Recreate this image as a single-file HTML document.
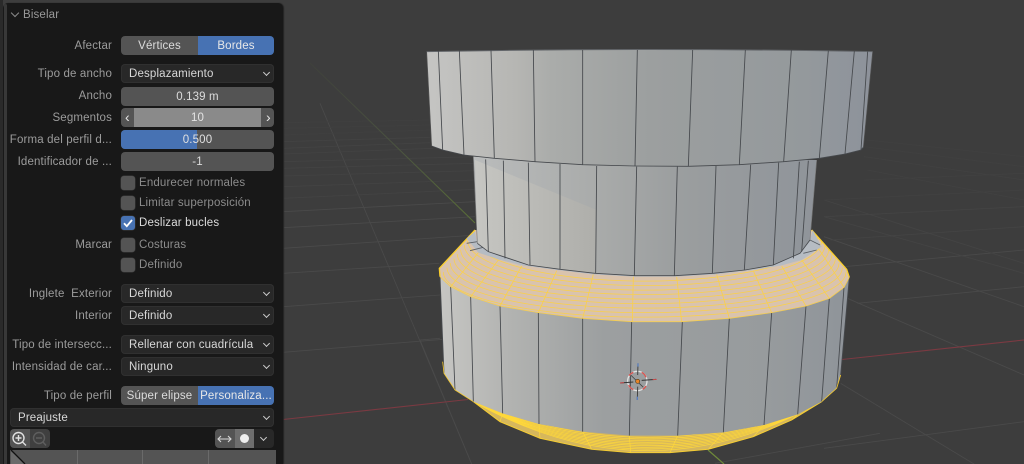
<!DOCTYPE html>
<html lang="es"><head><meta charset="utf-8"><title>Biselar</title>
<style>
html,body{margin:0;padding:0;width:1024px;height:464px;overflow:hidden;background:#3d3d3d}
*{box-sizing:border-box}
#v{position:absolute;left:0;top:0;filter:blur(.25px)}
#p{position:absolute;left:3px;top:3px;width:280px;height:461px;background:#181818;border-radius:5px 5px 0 0;box-shadow:1px 0 1px #222}
#root{position:absolute;left:0;top:0;width:1024px;height:464px;font:11.5px "Liberation Sans",sans-serif;letter-spacing:.15px;color:#ddd;filter:blur(.25px)}
#root div{position:absolute}
.l{left:0;width:112px;text-align:right;color:#9c9c9c;height:19px;line-height:20px;white-space:pre}
.w{left:121px;width:153px;height:19px;line-height:20px;border-radius:4px;text-align:center;background:#545454;color:#dcdcdc}
.d{background:#282828;text-align:left;padding-left:8px;color:#d8d8d8;box-shadow:inset 0 0 0 1px #303030}
.c{width:5px;height:5px;border-right:1.3px solid #ccc;border-bottom:1.3px solid #ccc;transform:rotate(45deg)}
.d .c{right:5px;top:6px}
.k{left:121px;width:14px;height:14px;border-radius:3px;background:#545454;box-shadow:0 0 0 .5px #3a3a3a}
.t{left:139px;height:14px;line-height:14px;color:#8c8c8c;white-space:nowrap}
</style></head><body>
<svg id="v" width="1024" height="464" viewBox="0 0 1024 464">
<defs>
<linearGradient id="g1" gradientUnits="userSpaceOnUse" x1="20" y1="0" x2="1358" y2="0"><stop offset="0" stop-color="#c5c5c3"/><stop offset=".2" stop-color="#b6b6b3"/><stop offset=".28" stop-color="#aaacaa"/><stop offset=".5" stop-color="#9c9f9f"/><stop offset=".85" stop-color="#94999c"/><stop offset="1" stop-color="#8d929b"/></linearGradient>
<linearGradient id="g2" gradientUnits="userSpaceOnUse" x1="160" y1="0" x2="1190" y2="0"><stop offset="0" stop-color="#babcbc"/><stop offset=".36" stop-color="#a9abaa"/><stop offset=".6" stop-color="#9b9e9f"/><stop offset="1" stop-color="#8f949a"/></linearGradient>
<linearGradient id="g2b" gradientUnits="userSpaceOnUse" x1="165" y1="0" x2="530" y2="0"><stop offset="0" stop-color="#c6c6c2"/><stop offset="1" stop-color="#aeaeaa"/></linearGradient>
<linearGradient id="g3" gradientUnits="userSpaceOnUse" x1="60" y1="0" x2="1288" y2="0"><stop offset="0" stop-color="#c6c6c3"/><stop offset=".17" stop-color="#b2b3b1"/><stop offset=".4" stop-color="#9c9fa0"/><stop offset=".8" stop-color="#979b9d"/><stop offset="1" stop-color="#8f949a"/></linearGradient>
<linearGradient id="gg" gradientUnits="userSpaceOnUse" x1="310" y1="63" x2="475" y2="223"><stop offset="0" stop-color="#3f413c"/><stop offset=".5" stop-color="#4a5240"/><stop offset="1" stop-color="#5a6f38"/></linearGradient>
<clipPath id="cb"><polygon points="165,0 58,115 60,140 92,170 152,200 240,228 355,248 488,265 637,275 785,275 928,265 1055,248 1158,228 1228,205 1272,172 1288,142 1280,118 1175,0"/></clipPath>
<clipPath id="cf"><polygon points="160,515 240,575 360,625 515,658 632,668 750,668 865,658 1000,620 1115,570 1205,515 1133,553 1032,585 910,607 773,617 628,617 488,605 357,582 248,550"/></clipPath>
</defs>
<g fill="none" stroke="#4a4a4a">
<g transform="translate(280 0) scale(.33333)" stroke-width="2.6">
<path d="M10 1057L490 1018M10 920L480 885M10 820L478 790M10 745L590 705M10 683L585 650M10 635L585 605"/>
<path d="M120 310L575 1392"/>
<path stroke="#434343" d="M10 595L585 568M10 560L585 540M10 528L585 512M10 505L585 490M10 485L585 470M10 462L460 445M10 445L450 428M10 425L450 412"/>
<path stroke="#404040" d="M10 405L450 390M10 385L450 375M10 368L450 360"/>
</g>
<g transform="translate(824 0) scale(.33333)" stroke-width="2.6">
<path d="M0 710L600 920M70 895L600 1125M50 1150L450 1392M100 910L600 860M60 800L600 750M0 1345L600 1265"/>
<path stroke="#444444" d="M0 600L600 790M0 650L600 820M20 720L600 680M0 650L600 620"/>
<path stroke="#414141" d="M130 510L600 600M120 470L600 540M0 600L600 570M120 540L600 520"/>
<path stroke="#404040" d="M120 440L600 500M130 420L600 470"/>
</g>
<g transform="translate(420 230) scale(.33333)" stroke-width="2.6">
<path d="M0 330L60 325M0 330L155 702M885 700L1380 610"/>
</g>
</g>
<path d="M283 419.5L468 399.5M842 359.5L1024 340" stroke="#7b3a42" stroke-width="1.1" fill="none"/>
<path d="M310 63L475 223" stroke="url(#gg)" stroke-width="1.1" fill="none"/>
<path d="M708 450L724 464" stroke="#6f8a3a" stroke-width="1.2" fill="none"/>

<g transform="translate(420 230) scale(.33333)">
<polygon points="160,515 240,575 360,625 515,658 632,668 750,668 865,658 1000,620 1115,570 1205,515 600,560" fill="#d6b75c"/>
<g clip-path="url(#cf)" fill="none" stroke="#ffd83a" stroke-width="2">
<path d="M160 515Q682 729 1205 515M160 515Q682 739 1205 515M160 515Q682 749 1205 515M160 515Q682 759 1205 515M160 515Q682 769 1205 515M160 515Q682 779 1205 515M160 515Q682 789 1205 515M160 515Q682 799 1205 515M160 515Q682 809 1205 515"/>
<path d="M248 550L240 575M357 582L360 625M488 605L515 658M628 617L632 668M773 617L750 668M910 607L865 658M1032 585L1000 620M1133 553L1115 570"/>
</g>
<polyline points="160,515 240,575 360,625 515,658 632,668 750,668 865,658 1000,620 1115,570 1205,515" fill="none" stroke="#f8cf30" stroke-width="2.8"/>
<polygon points="60,140 92,170 152,200 240,228 355,248 488,265 637,275 785,275 928,265 1055,248 1158,228 1228,205 1272,172 1288,142 1262,435 1250,475 1205,515 1133,553 1032,585 910,607 773,617 628,617 488,605 357,582 248,550 160,515 105,480 72,430" fill="url(#g3)"/>
<g fill="none" stroke="#46494d" stroke-width="2.6">
<path d="M92 170L105 480M152 200L160 515M240 228L248 550M355 248L357 582M488 265L488 605M635 275L628 617M787 275L773 617M928 265L910 607M1055 248L1032 585M1158 228L1133 553M1228 205L1205 515M1272 172L1250 475M60 140L72 430M1288 142L1262 435"/>
</g>
<polyline points="68,395 72,430 105,480 160,515" fill="none" stroke="#f7cb2e" stroke-width="2.4"/>
<polyline points="1262,435 1250,475 1205,515" fill="none" stroke="#f7cb2e" stroke-width="2.4"/>
<polygon points="165,0 58,115 60,140 92,170 152,200 240,228 355,248 488,265 637,275 785,275 928,265 1055,248 1158,228 1228,205 1272,172 1288,142 1280,118 1175,0" fill="#d9c3ae"/>
<g clip-path="url(#cb)" fill="none" stroke="#fad04a" stroke-width="2.2">
<path d="M154 18.5A520 135 0 0 0 1194 18.5M143 32A531 135 0 0 0 1205 32M133 45.5A541 135 0 0 0 1215 45.5M122 59A552 135 0 0 0 1226 59M112 72.5A562 135 0 0 0 1236 72.5M102 86A572 135 0 0 0 1246 86M91 99.5A583 135 0 0 0 1257 99.5M81 113A593 135 0 0 0 1267 113M70 126.5A604 135 0 0 0 1278 126.5"/>
<path stroke-width="2.4" d="M175 68L92 170M235 90L152 200M305 108L240 228M410 122L355 248M520 133L488 265M640 140L637 275M770 140L785 275M890 133L928 265M1000 122L1055 248M1085 108L1158 228M1145 90L1228 205M1195 55L1272 172"/>
</g>
<polyline points="60,140 92,170 152,200 240,228 355,248 488,265 637,275 785,275 928,265 1055,248 1158,228 1228,205 1272,172 1288,142" fill="none" stroke="#f6ce50" stroke-width="2.4"/>
<polyline points="165,0 58,115 60,140" fill="none" stroke="#fbcf2c" stroke-width="4"/>
<polyline points="1175,0 1280,118 1288,142" fill="none" stroke="#fbcf2c" stroke-width="4"/>
<polygon points="140,25 165,5 172,40 205,65 325,105 420,118 525,130 645,137 765,137 880,130 975,120 1060,105 1140,70 1170,30 1178,0 1205,50 1145,90 1085,106 1000,120 890,133 770,140 640,140 520,133 410,120 305,106 235,88 175,68" fill="#b6bcc3"/>
<path d="M140 40L172 35M150 62L190 52M1170 30L1200 45M1150 70L1190 60" stroke="#5a5f64" stroke-width="2.5" fill="none"/>
<polygon points="160,-220 1190,-210 1170,30 1140,70 1060,105 975,120 880,130 765,137 645,137 525,130 420,118 325,105 205,65 172,40" fill="url(#g2)"/>
<polygon points="165,-210 530,-60 527,130 420,118 325,105 205,65 172,40" fill="url(#g2b)"/>
<g fill="none" stroke="#46494d" stroke-width="2.6">
<path d="M197 -212L205 65M250 -208L255 85M325 -202L330 105M420 -198L420 118M530 -192L527 130M650 -190L643 137M772 -190L763 137M888 -192L877 130M992 -196L973 120M1076 -202L1060 105M1138 -205L1120 85M1165 -208L1145 65"/>
<polyline points="172,40 205,65 325,105 420,118 525,130 645,137 765,137 880,130 975,120 1060,105 1140,70 1170,30"/>
<path d="M160 -220L172 40M1190 -210L1170 30" stroke="#777" stroke-width="2"/>
</g>
<g fill="none" stroke-width="3">
<circle cx="652" cy="453" r="29" stroke="#e2e2e2" stroke-width="4"/>
<path d="M627 437A29 29 0 0 1 640 427M665 427A29 29 0 0 1 678 442M678 468A29 29 0 0 1 668 478M640 479A29 29 0 0 1 626 465" stroke="#d9534f" stroke-width="4"/>
<path d="M600 459L640 456M665 451L708 448" stroke="#333" stroke-width="3"/>
<path d="M600 459L612 458M698 449L710 448" stroke="#c84a4a" stroke-width="3"/>
<path d="M654 400L653 435M653 470L652 510" stroke="#444" stroke-width="3"/>
<path d="M654 400L654 410M652 500L652 510" stroke="#5a7fc0" stroke-width="4"/>
<path d="M632 435L670 472" stroke="#444" stroke-width="2.5"/>
<circle cx="653" cy="454" r="6" fill="#e8852a" stroke="#5a3a10" stroke-width="2"/>
</g>
</g>

<g transform="translate(420 40) scale(.33333)">
<path d="M20 35Q690 22 1358 35L1330 322L1323 330L1275 342L1198 355L1091 365L958 374L805 379L645 378L488 374L345 365L223 355L132 345L68 330L35 318Z" fill="url(#g1)"/>
<path d="M20 35Q690 22 1358 35" fill="none" stroke="#63666a" stroke-width="3"/>
<g fill="none" stroke="#46494d" stroke-width="2.6">
<path d="M55 33L68 330M118 32L132 345M213 31L223 355M340 30L345 365M488 30L488 374M652 30L645 378M818 30L805 379M976 30L958 374M1114 30L1091 365M1225 32L1198 355M1303 33L1275 342M1343 34L1323 330"/>
<polyline points="35,318 68,330 132,345 223,355 345,365 488,374 645,378 805,379 958,374 1091,365 1198,355 1275,342 1323,330 1330,322"/>
<path d="M20 35L35 318M1358 35L1330 322" stroke="#555" stroke-width="2"/>
</g>
</g>
</svg>

<div id="root">
<div style="left:0;top:0;width:3px;height:464px;background:#2a2a2a"></div>
<div id="p"></div>
<div style="left:4px;top:4px;width:3px;height:460px;background:#383838;border-radius:2px 2px 0 0"></div>
<div class="c" style="left:12px;top:10px;width:6px;height:6px;border-color:#8a8a8a"></div>
<div style="left:23px;top:8px;height:15px;line-height:15px;color:#999">Biselar</div>

<div class="l" style="top:36px">Afectar</div>
<div class="w" style="top:36px;width:77px;border-radius:4px 0 0 4px">Vértices</div>
<div class="w" style="top:36px;left:198px;width:76px;background:#4772b3;border-radius:0 4px 4px 0;color:#e8e8e8">Bordes</div>

<div class="l" style="top:64px">Tipo de ancho</div>
<div class="w d" style="top:64px">Desplazamiento<div class="c"></div></div>
<div class="l" style="top:86px">Ancho</div>
<div class="w" style="top:87px">0.139 m</div>
<div class="l" style="top:108px">Segmentos</div>
<div class="w" style="top:108px"></div>
<div style="left:134px;top:108px;width:127px;height:19px;line-height:20px;background:#8a8a8a;text-align:center;color:#e4e4e4">10</div>
<div style="left:125px;top:108px;height:19px;line-height:18px;font-size:14px;color:#e8e8e8">‹</div>
<div style="left:266px;top:108px;height:19px;line-height:18px;font-size:14px;color:#e8e8e8">›</div>
<div class="l" style="top:130px">Forma del perfil d...</div>
<div class="w" style="top:130px"></div>
<div style="left:121px;top:130px;width:76px;height:19px;background:#4772b3;border-radius:4px 0 0 4px"></div>
<div style="left:121px;top:130px;width:153px;height:19px;line-height:20px;text-align:center;color:#e0e0e0">0.500</div>
<div class="l" style="top:152px">Identificador de ...</div>
<div class="w" style="top:152px">-1</div>

<div class="k" style="top:176px"></div><div class="t" style="top:176px">Endurecer normales</div>
<div class="k" style="top:196px"></div><div class="t" style="top:196px">Limitar superposición</div>
<div class="k" style="top:216px;background:#4772b3"><svg width="14" height="14" viewBox="0 0 14 14" style="display:block"><path d="M3 7.3L5.8 10.2L11 4" fill="none" stroke="#fff" stroke-width="1.8"/></svg></div><div class="t" style="top:216px;color:#dcdcdc">Deslizar bucles</div>
<div class="l" style="top:235px">Marcar</div>
<div class="k" style="top:238px"></div><div class="t" style="top:238px">Costuras</div>
<div class="k" style="top:258px"></div><div class="t" style="top:258px">Definido</div>

<div class="l" style="top:284px">Inglete  Exterior</div>
<div class="w d" style="top:284px">Definido<div class="c"></div></div>
<div class="l" style="top:306px">Interior</div>
<div class="w d" style="top:306px">Definido<div class="c"></div></div>
<div class="l" style="top:335px">Tipo de intersecc...</div>
<div class="w d" style="top:335px">Rellenar con cuadrícula<div class="c"></div></div>
<div class="l" style="top:357px">Intensidad de car...</div>
<div class="w d" style="top:357px">Ninguno<div class="c"></div></div>
<div class="l" style="top:386px">Tipo de perfil</div>
<div class="w" style="top:386px;width:77px;border-radius:4px 0 0 4px">Súper elipse</div>
<div class="w" style="top:386px;left:198px;width:76px;background:#4772b3;border-radius:0 4px 4px 0;color:#e8e8e8;white-space:nowrap;overflow:hidden">Personaliza...</div>
<div class="w d" style="top:408px;left:10px;width:264px">Preajuste<div class="c"></div></div>

<div style="left:10px;top:429px;width:20px;height:19px;background:#545454;border-radius:4px 0 0 4px"></div>
<div style="left:30px;top:429px;width:20px;height:19px;background:#3f3f3f;border-radius:0 4px 4px 0"></div>
<div style="left:215px;top:429px;width:20px;height:19px;background:#545454;border-radius:4px 0 0 4px"></div>
<div style="left:235px;top:429px;width:19px;height:19px;background:#6e6e6e"></div>
<div style="left:254px;top:429px;width:20px;height:19px;background:#282828;border-radius:0 4px 4px 0"></div>
<div class="c" style="left:261px;top:435px"></div>
<svg width="280" height="24" viewBox="0 0 280 24" style="position:absolute;left:0;top:428px">
<g fill="none" stroke="#e0e0e0" stroke-width="1.4"><circle cx="18.5" cy="10" r="5.5"/><path d="M15.5 10H21.5M18.5 7V13M22.5 14L26 17.5"/></g>
<g fill="none" stroke="#5e5e5e" stroke-width="1.4"><circle cx="39" cy="10" r="5.5"/><path d="M36 10H42M43 14L46 17.5"/></g>
<path d="M218 11H231M221 8L218 11L221 14M228 8L231 11L228 14" fill="none" stroke="#d8d8d8" stroke-width="1.1"/>
<circle cx="244.5" cy="10.5" r="4.5" fill="#eee"/>
</svg>
<div style="left:10px;top:450px;width:266px;height:14px;background:#545454"></div>
<div style="left:77px;top:450px;width:1px;height:14px;background:#6a6a6a"></div>
<div style="left:142px;top:450px;width:1px;height:14px;background:#6a6a6a"></div>
<div style="left:208px;top:450px;width:1px;height:14px;background:#6a6a6a"></div>
<svg width="20" height="14" viewBox="0 0 20 14" style="position:absolute;left:10px;top:450px"><polygon points="1,1 15,14 1,14" fill="#6a6a6a"/><path d="M1 0L15 14" stroke="#111" stroke-width="1.3"/></svg>
</div>
</body></html>
